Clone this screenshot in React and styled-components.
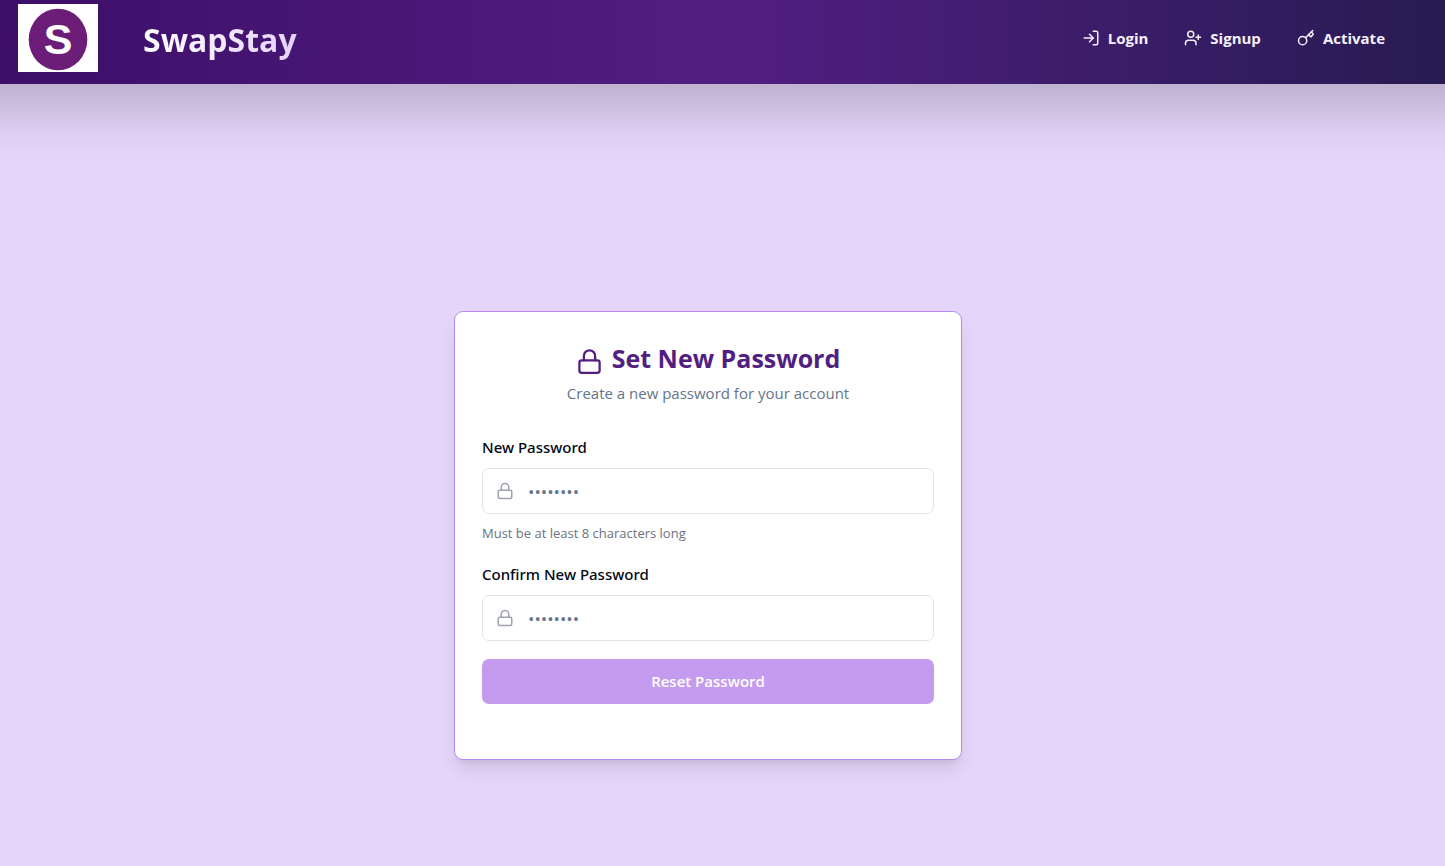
import React from "react";
import styled, { createGlobalStyle } from "styled-components";
import { Lock, LogIn, UserPlus, Key } from "lucide-react";

const GlobalStyle = createGlobalStyle`
  *, *::before, *::after { box-sizing: border-box; }
  body {
    margin: 0;
    background: #e5d5fa;
    color: #020817;
    font-family: "Segoe UI", "Open Sans", "Noto Sans", sans-serif;
    font-size: 15px;
    line-height: 24px;
  }
`;

const Page = styled.div`
  min-height: 100vh;
  display: flex;
  flex-direction: column;
`;

const Header = styled.header`
  display: flex;
  align-items: flex-start;
  justify-content: space-between;
  height: 84px;
  padding: 4px 60px 0 18px;
  background: linear-gradient(to right, #3d0f68, #521e82 50%, #271b52);
  box-shadow: 0 -36px 50px 60px rgba(0, 0, 0, 0.2);
`;

const Brand = styled.a`
  display: flex;
  align-items: center;
  gap: 45px;
  text-decoration: none;
`;

const Logo = styled.svg`
  width: 80px;
  height: 68px;
  background: #fff;
`;

const LogoLetter = styled.text`
  font-family: "Liberation Sans", Arial, sans-serif;
  font-size: 43px;
  font-weight: 700;
  text-anchor: middle;
  fill: #fff;
`;

const BrandName = styled.span`
  padding-top: 4px;
  font-size: 32px;
  line-height: 40px;
  font-weight: 700;
  color: transparent;
  background: linear-gradient(to right, #ffffff, #e4d2fb);
  background-clip: text;
`;

const Nav = styled.nav`
  display: flex;
  gap: 36px;
  padding-top: 22px;
`;

const NavLink = styled.a`
  display: flex;
  align-items: center;
  gap: 8px;
  color: #f5f0fb;
  font-weight: 700;
  text-decoration: none;
`;

const Main = styled.main`
  flex: 1;
  display: flex;
  justify-content: center;
  align-items: flex-start;
  padding: 227px 29px 90px 0;
`;

const Card = styled.section`
  width: 508px;
  max-width: 100%;
  padding: 26px 27px 55px;
  background: #fff;
  border: 1px solid #b98af0;
  border-radius: 9px;
  box-shadow: 0 12px 18px -3px rgba(0, 0, 0, 0.1), 0 4px 7px -4px rgba(0, 0, 0, 0.1);
`;

const Title = styled.h1`
  display: flex;
  align-items: center;
  justify-content: center;
  gap: 9px;
  margin: 0;
  color: #521e82;
  font-size: 25px;
  line-height: 40px;
  font-weight: 700;

  svg { margin-top: 6px; }
`;

const Subtitle = styled.p`
  margin: 0 0 27px;
  line-height: 30px;
  text-align: center;
  color: #64748b;
`;

const Form = styled.form`
  display: flex;
  flex-direction: column;
  gap: 18px;
`;

const Field = styled.div`
  display: flex;
  flex-direction: column;
  gap: 9px;
`;

const Label = styled.label`
  font-family: "Segoe UI", "Noto Sans", "Open Sans", sans-serif;
  font-weight: 500;
`;

const InputBox = styled.div`
  display: flex;
  align-items: center;
  gap: 14px;
  height: 46px;
  padding: 0 13px;
  border: 1px solid #e2e4ee;
  border-radius: 7px;
  color: #9ca3af;
`;

const Input = styled.input`
  flex: 1;
  min-width: 0;
  padding: 2px 0 0;
  border: 0;
  outline: 0;
  background: transparent;
  font: inherit;
  font-size: 17px;
  color: #020817;

  &::placeholder { color: #64748b; opacity: 1; }
`;

const Hint = styled.p`
  margin: 0;
  font-size: 13px;
  line-height: 21px;
  color: #6b7280;
`;

const SubmitButton = styled.button`
  height: 45px;
  padding: 0 0 2px;
  border: 0;
  border-radius: 7px;
  background: #c49bef;
  color: #fff;
  font: inherit;
  font-weight: 600;
`;

function PasswordField({ id, label, hint }) {
  return (
    <Field>
      <Label htmlFor={id}>{label}</Label>
      <InputBox>
        <Lock size={18} aria-hidden="true" />
        <Input id={id} type="password" placeholder="••••••••" />
      </InputBox>
      {hint && <Hint>{hint}</Hint>}
    </Field>
  );
}

export default function App() {
  return (
    <Page>
      <GlobalStyle />
      <Header>
        <Brand href="#">
          <Logo viewBox="0 0 80 68" aria-hidden="true">
            <ellipse cx="40" cy="35.5" rx="29.3" ry="30.8" fill="#6b1d77" />
            <LogoLetter x="40" y="50">S</LogoLetter>
          </Logo>
          <BrandName>SwapStay</BrandName>
        </Brand>
        <Nav>
          <NavLink href="#login"><LogIn size={18} />Login</NavLink>
          <NavLink href="#signup"><UserPlus size={18} />Signup</NavLink>
          <NavLink href="#activate"><Key size={18} />Activate</NavLink>
        </Nav>
      </Header>
      <Main>
        <Card>
          <Title><Lock size={27} aria-hidden="true" />Set New Password</Title>
          <Subtitle>Create a new password for your account</Subtitle>
          <Form onSubmit={(event) => event.preventDefault()}>
            <PasswordField id="new-password" label="New Password" hint="Must be at least 8 characters long" />
            <PasswordField id="confirm-password" label="Confirm New Password" />
            <SubmitButton type="submit">Reset Password</SubmitButton>
          </Form>
        </Card>
      </Main>
    </Page>
  );
}
